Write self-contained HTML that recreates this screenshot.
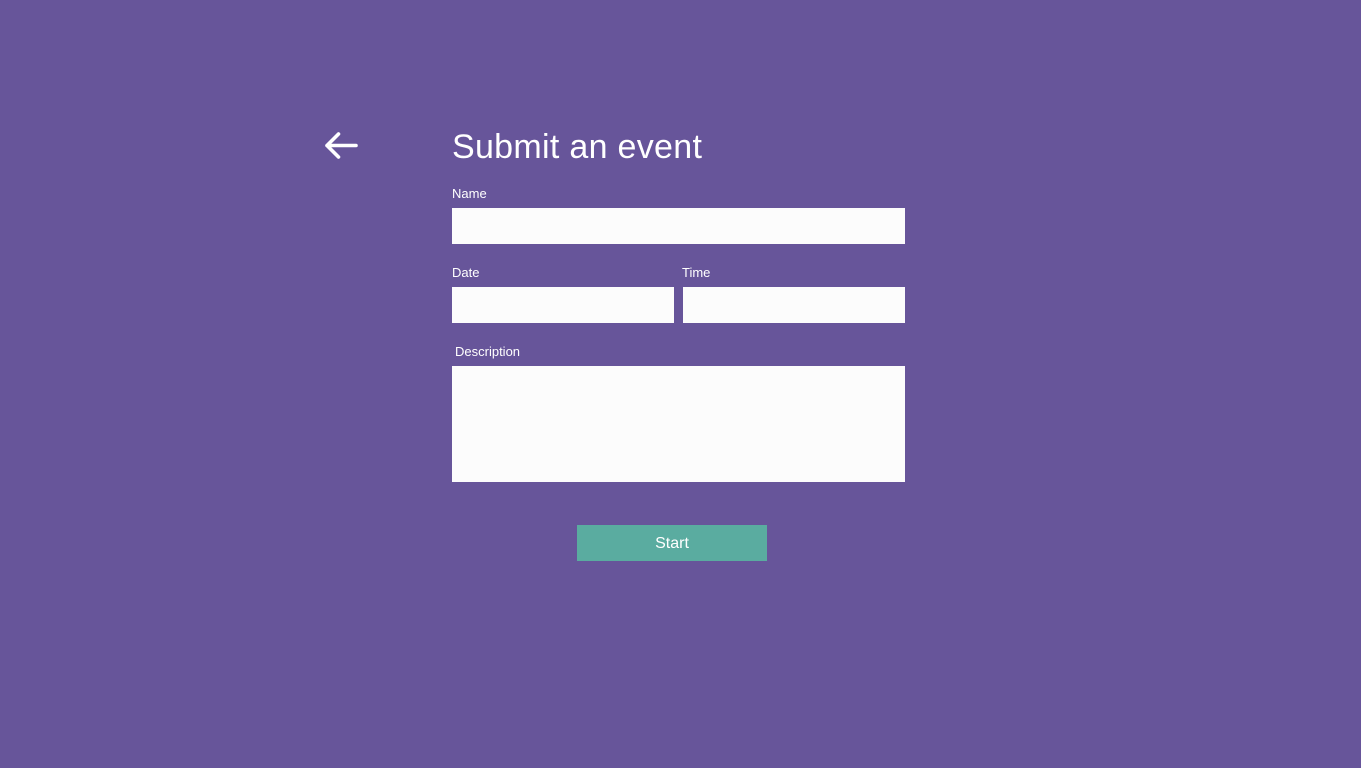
<!DOCTYPE html>
<html><head><meta charset="utf-8"><style>
html,body{margin:0;padding:0;}
body{width:1361px;height:768px;background:#67559a;position:relative;overflow:hidden;font-family:"Liberation Sans",sans-serif;color:#fff;}
.t{position:absolute;white-space:nowrap;}
.box{position:absolute;background:#fcfcfc;}
</style></head><body>
<svg style="position:absolute;left:322px;top:130px" width="38" height="32" viewBox="0 0 38 32"><path d="M34 15.5H5 M16.5 4L5 15.5L16.5 27" stroke="#fff" stroke-width="3.6" fill="none" stroke-linecap="round" stroke-linejoin="round"/></svg>
<div class="t" style="left:452px;top:128px;font-size:34px;letter-spacing:0.3px;">Submit an event</div>
<div class="t" style="left:452px;top:186px;font-size:13px;">Name</div>
<div class="box" style="left:452px;top:208px;width:453px;height:36px;"></div>
<div class="t" style="left:452px;top:265px;font-size:13px;">Date</div>
<div class="t" style="left:682px;top:265px;font-size:13px;">Time</div>
<div class="box" style="left:452px;top:287px;width:222px;height:36px;"></div>
<div class="box" style="left:683px;top:287px;width:222px;height:36px;"></div>
<div class="t" style="left:455px;top:344px;font-size:13px;">Description</div>
<div class="box" style="left:452px;top:366px;width:453px;height:116px;"></div>
<div style="position:absolute;left:577px;top:525px;width:190px;height:36px;background:#5aaca0;font-size:16px;line-height:38px;text-align:center;">Start</div>
</body></html>
